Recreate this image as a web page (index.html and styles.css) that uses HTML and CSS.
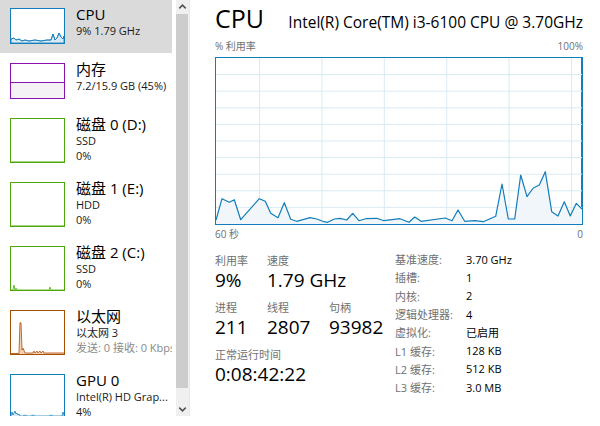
FILE: index.html
```html
<!DOCTYPE html>
<html lang="zh-CN">
<head>
<meta charset="utf-8">
<title>任务管理器 - CPU</title>
<link rel="stylesheet" href="styles.css">
</head>
<body>
<div class="app">
  <aside class="side">
    <div class="list">
      <div class="item selected">
        <div class="thumb h2 cpu">
          <svg viewBox="0 0 53 34" preserveAspectRatio="none"><path class="fill-blue" d="M0,34 L0,30 L3,29 L5,31 L8,30 L11,32 L14,31 L18,32 L24,31 L30,32 L36,31 L40,31 L42,25 L44,31 L46,29 L48,24 L50,28 L52,30 L53,27 L53,34 Z"/><path class="line-blue" d="M0,30 L3,29 L5,31 L8,30 L11,32 L14,31 L18,32 L24,31 L30,32 L36,31 L40,31 L42,25 L44,31 L46,29 L48,24 L50,28 L52,30 L53,27"/></svg>
        </div>
        <div class="info">
          <div class="title">CPU</div>
          <div class="sub">9% 1.79 GHz</div>
        </div>
      </div>
      <div class="item">
        <div class="thumb h2 mem"><div class="mem-used"></div></div>
        <div class="info">
          <div class="title">内存</div>
          <div class="sub">7.2/15.9 GB (45%)</div>
        </div>
      </div>
      <div class="item">
        <div class="thumb h3 disk"><div class="disk-base"></div></div>
        <div class="info">
          <div class="title">磁盘 0 (D:)</div>
          <div class="sub">SSD</div>
          <div class="sub">0%</div>
        </div>
      </div>
      <div class="item">
        <div class="thumb h3 disk"><div class="disk-base"></div></div>
        <div class="info">
          <div class="title">磁盘 1 (E:)</div>
          <div class="sub">HDD</div>
          <div class="sub">0%</div>
        </div>
      </div>
      <div class="item">
        <div class="thumb h3 disk">
          <svg viewBox="0 0 53 43" preserveAspectRatio="none"><path class="line-green" d="M0,43 L2,43 L3,38 L4,43 L5,41 L6,43 L38,43 L39,40 L40,43 L53,43"/></svg>
        </div>
        <div class="info">
          <div class="title">磁盘 2 (C:)</div>
          <div class="sub">SSD</div>
          <div class="sub">0%</div>
        </div>
      </div>
      <div class="item">
        <div class="thumb h3 eth">
          <svg viewBox="0 0 53 44" preserveAspectRatio="none"><path class="fill-orange" d="M0,44 L8,44 L9,12 L10,12 L11,40 L12,38 L14,43 L22,43 L23,41 L24,43 L26,41 L27,43 L29,41 L30,43 L32,41 L33,43 L53,43 L53,44 Z"/><path class="line-orange" d="M0,43.5 L8,43.5 L9,12 L10,12 L11,40 L12,38 L14,43 L22,43 L23,41 L24,43 L26,41 L27,43 L29,41 L30,43 L32,41 L33,43 L53,43"/></svg>
        </div>
        <div class="info">
          <div class="title">以太网</div>
          <div class="sub">以太网 3</div>
          <div class="sub muted">发送: 0 接收: 0 Kbps</div>
        </div>
      </div>
      <div class="item">
        <div class="thumb h3 gpu">
          <svg viewBox="0 0 53 43" preserveAspectRatio="none"><path class="fill-blue" d="M0,43 L0,40 L1,37 L2,40 L3,38 L4,36 L5,39 L6,38 L7,40 L8,39 L9,41 L12,41 L14,40 L16,41 L20,41 L22,40 L24,41 L38,41 L40,40 L42,41 L51,41 L52,37 L53,40 L53,43 Z"/></svg>
        </div>
        <div class="info">
          <div class="title">GPU 0</div>
          <div class="sub">Intel(R) HD Grap...</div>
          <div class="sub">4%</div>
        </div>
      </div>
    </div>
    <div class="scrollbar">
      <div class="sb-btn"><svg viewBox="0 0 14 14"><path d="M3.5,8.5 L7,5 L10.5,8.5" /></svg></div>
      <div class="sb-thumb"></div>
      <div class="sb-btn"><svg viewBox="0 0 14 14"><path d="M3.5,5.5 L7,9 L10.5,5.5" /></svg></div>
    </div>
  </aside>

  <main class="main">
    <header class="head">
      <h1 class="head-title">CPU</h1>
      <div class="head-model">Intel(R) Core(TM) i3-6100 CPU @ 3.70GHz</div>
    </header>
    <div class="axis top">
      <span>% 利用率</span><span>100%</span>
    </div>
    <div class="graph">
      <svg viewBox="0 0 366 166" preserveAspectRatio="none">
        <g class="grid">
          <line x1="0" y1="16.6" x2="366" y2="16.6"/>
          <line x1="0" y1="33.2" x2="366" y2="33.2"/>
          <line x1="0" y1="49.8" x2="366" y2="49.8"/>
          <line x1="0" y1="66.4" x2="366" y2="66.4"/>
          <line x1="0" y1="83" x2="366" y2="83"/>
          <line x1="0" y1="99.6" x2="366" y2="99.6"/>
          <line x1="0" y1="116.2" x2="366" y2="116.2"/>
          <line x1="0" y1="132.8" x2="366" y2="132.8"/>
          <line x1="0" y1="149.4" x2="366" y2="149.4"/>
          <line x1="43.5" y1="0" x2="43.5" y2="166"/>
          <line x1="105.9" y1="0" x2="105.9" y2="166"/>
          <line x1="168.3" y1="0" x2="168.3" y2="166"/>
          <line x1="230.7" y1="0" x2="230.7" y2="166"/>
          <line x1="293.1" y1="0" x2="293.1" y2="166"/>
          <line x1="355.5" y1="0" x2="355.5" y2="166"/>
        </g>
        <path class="area" d="M0,166 L0,162 L6,140.7 L13.3,144.3 L18.3,141.7 L24.7,161.7 L43.3,140.7 L49.3,143.3 L54.7,155.3 L62,159.7 L68.3,144.7 L74.7,161.3 L80.7,163.3 L94,159.7 L100.7,161 L108,163.7 L111.7,164.3 L118.3,161 L124,160.3 L130.7,162 L136.7,155.3 L143,162.7 L149.7,160.7 L160.7,160.3 L168,162.7 L184,160.7 L193,164.3 L198.7,159 L205,163.3 L229.3,160 L236,162.7 L242,152 L248.7,163.3 L258.7,162.7 L267.3,163.7 L279.7,158.3 L286,126 L292.3,161 L298.7,161 L304.7,117 L311,138.7 L317.3,130 L323.3,127 L329.3,113.7 L335.7,153.7 L342,158 L348.3,143.7 L354.3,158 L360.3,145.3 L366,151 L366,166 Z"/>
        <path class="curve" d="M0,162 L6,140.7 L13.3,144.3 L18.3,141.7 L24.7,161.7 L43.3,140.7 L49.3,143.3 L54.7,155.3 L62,159.7 L68.3,144.7 L74.7,161.3 L80.7,163.3 L94,159.7 L100.7,161 L108,163.7 L111.7,164.3 L118.3,161 L124,160.3 L130.7,162 L136.7,155.3 L143,162.7 L149.7,160.7 L160.7,160.3 L168,162.7 L184,160.7 L193,164.3 L198.7,159 L205,163.3 L229.3,160 L236,162.7 L242,152 L248.7,163.3 L258.7,162.7 L267.3,163.7 L279.7,158.3 L286,126 L292.3,161 L298.7,161 L304.7,117 L311,138.7 L317.3,130 L323.3,127 L329.3,113.7 L335.7,153.7 L342,158 L348.3,143.7 L354.3,158 L360.3,145.3 L366,151"/>
      </svg>
    </div>
    <div class="axis bottom">
      <span>60 秒</span><span>0</span>
    </div>

    <section class="stats">
      <div class="dyn">
        <div class="dyn-row">
          <div class="stat c1"><div class="label">利用率</div><div class="value">9%</div></div>
          <div class="stat c2"><div class="label">速度</div><div class="value">1.79 GHz</div></div>
        </div>
        <div class="dyn-row">
          <div class="stat c1"><div class="label">进程</div><div class="value">211</div></div>
          <div class="stat c2"><div class="label">线程</div><div class="value">2807</div></div>
          <div class="stat"><div class="label">句柄</div><div class="value">93982</div></div>
        </div>
        <div class="dyn-row">
          <div class="stat"><div class="label">正常运行时间</div><div class="value">0:08:42:22</div></div>
        </div>
      </div>
      <dl class="spec">
        <dt>基准速度:</dt><dd>3.70 GHz</dd>
        <dt>插槽:</dt><dd>1</dd>
        <dt>内核:</dt><dd>2</dd>
        <dt>逻辑处理器:</dt><dd>4</dd>
        <dt>虚拟化:</dt><dd>已启用</dd>
        <dt>L1 缓存:</dt><dd>128 KB</dd>
        <dt>L2 缓存:</dt><dd>512 KB</dd>
        <dt>L3 缓存:</dt><dd>3.0 MB</dd>
      </dl>
    </section>
  </main>
</div>
</body>
</html>
```

FILE: styles.css
```css
* { box-sizing: border-box; }
html, body { margin: 0; padding: 0; background: #ffffff; }
body {
  font-family: "Segoe UI", "Open Sans", "Noto Sans CJK SC", sans-serif;
  color: #000000;
  width: 600px;
  height: 426px;
  overflow: hidden;
}
.app { display: flex; height: 426px; }

/* sidebar */
.side { display: flex; height: 416px; flex: none; }
.list { width: 172px; overflow: hidden; margin-right: 4px; }
.item {
  display: flex;
  align-items: flex-start;
  gap: 11px;
  padding: 8px 0 9px 10px;
  margin-bottom: 2px;
  white-space: nowrap;
  overflow: hidden;
}
.item.selected { background: #dadada; }
.thumb { width: 55px; flex: none; border: 1px solid; background: #fff; position: relative; overflow: hidden; }
.thumb svg { display: block; width: 100%; height: 100%; }
.thumb.h2 { height: 36px; }
.thumb.h3 { height: 45px; }
.thumb.cpu, .thumb.gpu { border-color: #117dbb; }
.thumb.mem { border-color: #8b12ae; display: flex; flex-direction: column; justify-content: flex-end; }
.mem-used { height: 16px; border-top: 1px solid #8b12ae; background: #f4f2f4; }
.thumb.disk { border-color: #4da60c; display: flex; flex-direction: column; justify-content: flex-end; }
.disk-base { height: 1px; background: #a6d386; }
.thumb.eth { border-color: #a74f01; }
.fill-blue { fill: #d9e9f5; stroke: #117dbb; stroke-width: 0.8; }
.line-blue { fill: none; stroke: #117dbb; stroke-width: 0.8; }
.line-green { fill: none; stroke: #6cbf2f; stroke-width: 1; }
.fill-orange { fill: #f1d3b8; }
.line-orange { fill: none; stroke: #c0662a; stroke-width: 1; }

.info { min-width: 0; margin-top: -3px; }
.title { font-size: 15px; line-height: 18px; color: #000; }
.sub { font-size: 11px; line-height: 15px; color: #1a1a1a; }
.sub.muted { color: #8a8a8a; }

.scrollbar {
  width: 14px;
  display: flex;
  flex-direction: column;
  background: #f0f0f0;
  border-right: 1px solid #e8e8e8;
}
.sb-btn { height: 14px; flex: none; }
.sb-btn svg { display: block; width: 13px; height: 14px; }
.sb-btn path { fill: none; stroke: #505050; stroke-width: 1.6; }
.sb-thumb { flex: 1; background: #cdcdcd; margin: 0 1px 14px 0; }

/* main */
.main { padding: 0 0 0 25px; width: 393px; flex: none; }
.head {
  display: flex;
  justify-content: space-between;
  align-items: baseline;
  width: 368px;
  height: 36px;
}
.head-title { font-size: 25px; font-weight: normal; margin: 0; line-height: 36px; }
.head-model { font-size: 15.5px; }
.axis {
  display: flex;
  justify-content: space-between;
  width: 368px;
  font-size: 10px;
  color: #707070;
}
.axis.top { line-height: 20px; height: 21px; }
.axis.bottom { line-height: 18px; height: 28px; }
.graph {
  width: 368px;
  height: 168px;
  border: 1px solid #117dbb;
  border-right-width: 2px;
}
.graph svg { display: block; width: 366px; height: 166px; }
.grid line { stroke: #d9eaf4; stroke-width: 1; }
.area { fill: #f1f6fa; }
.curve { fill: none; stroke: #117dbb; stroke-width: 1.2; stroke-linejoin: round; }

.stats { display: flex; }
.dyn { width: 180px; flex: none; }
.dyn-row { display: flex; margin-bottom: 8px; }
.stat { white-space: nowrap; }
.stat.c1 { width: 52px; }
.stat.c2 { width: 62px; }
.label { font-size: 11px; line-height: 15px; color: #707070; }
.value { font-size: 19px; line-height: 24px; color: #000; }

.spec {
  display: grid;
  grid-template-columns: 71px auto;
  grid-auto-rows: 18.3px;
  margin: -3px 0 0 0;
  font-size: 11px;
  align-items: center;
  white-space: nowrap;
}
.spec dt { color: #707070; }
.spec dd { margin: 0; color: #000; }
```
